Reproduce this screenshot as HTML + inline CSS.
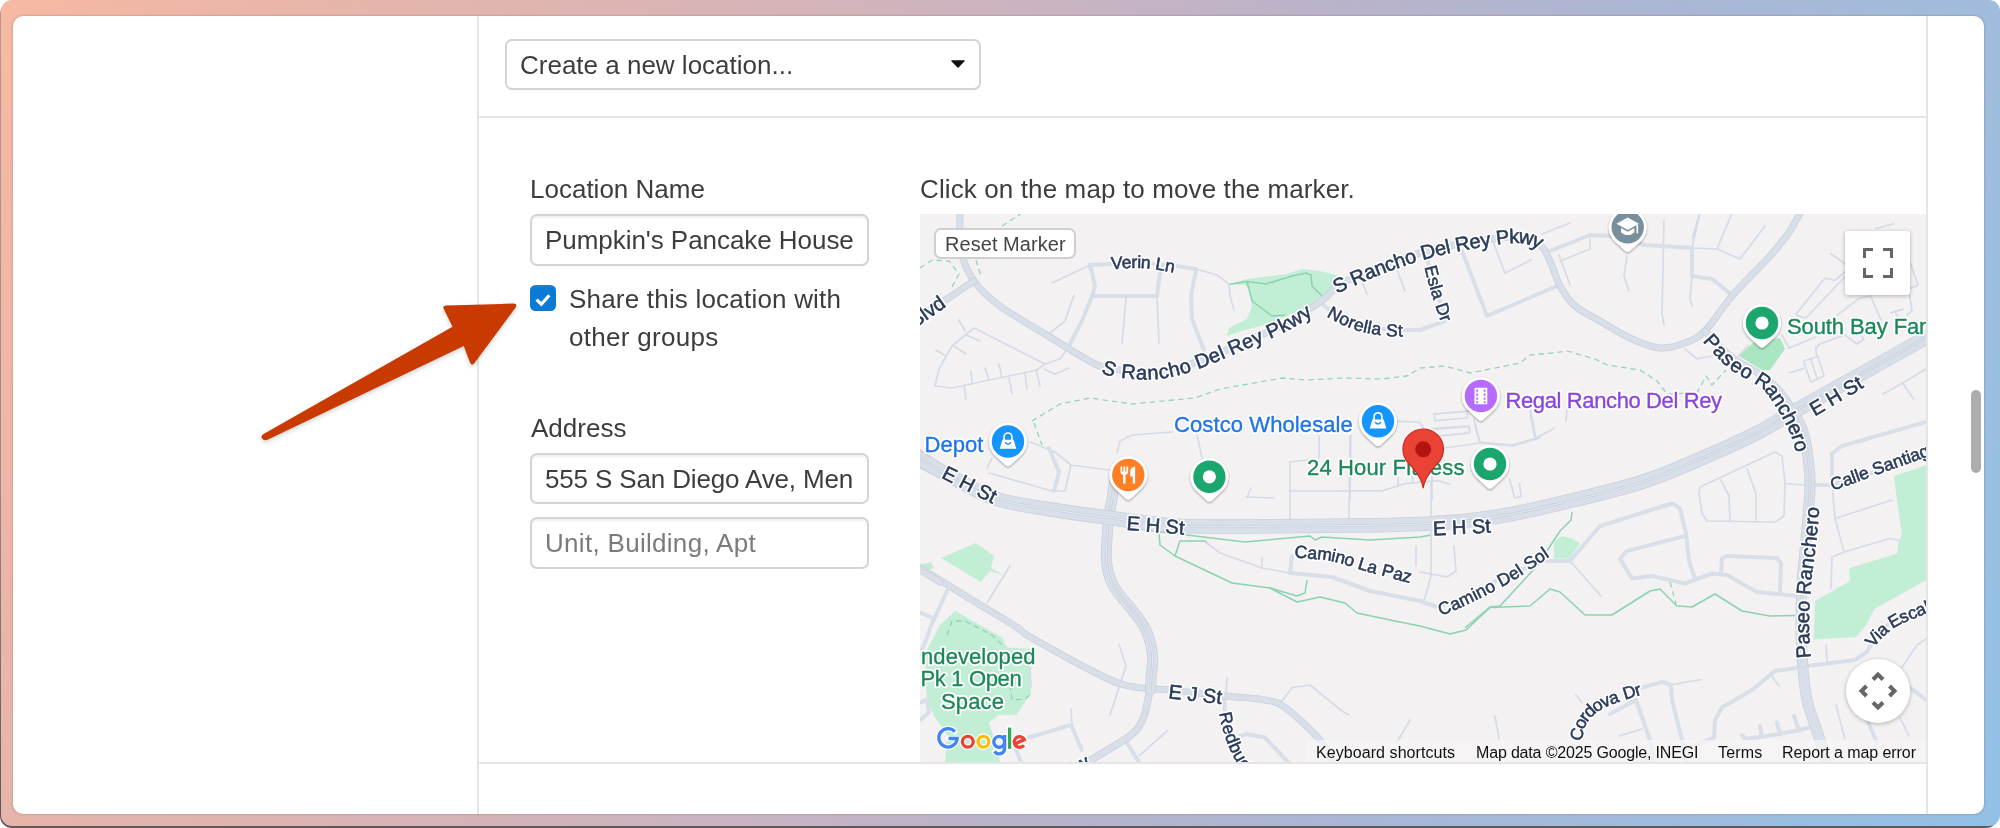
<!DOCTYPE html>
<html>
<head>
<meta charset="utf-8">
<title>Location</title>
<style>
html,body{margin:0;padding:0;}
body{width:2000px;height:828px;overflow:hidden;background:#fff;position:relative;font-family:"Liberation Sans",sans-serif;color:#404040;}
.abs{position:absolute;}
#shadow{left:0;top:2px;width:1998px;height:826px;border-radius:12px;background:linear-gradient(to bottom,#b39a90 0%,#9a8780 60%,#5e5a59 97%);}
#frame{left:1px;top:0;width:1999px;height:826px;border-radius:11px;
  background:linear-gradient(112deg,#f7b9a3 0%,#e7b5aa 14%,#d9b4b5 30%,#ccb4c0 43%,#bab3ca 57%,#aab7d4 72%,#a0bcdc 86%,#92c1e6 100%);}
#panel{left:13px;top:16px;width:1971px;height:798px;border-radius:10px;background:#fff;overflow:hidden;box-shadow:0 0 2.5px rgba(90,40,30,.38);}
.vline{width:2px;background:#e5e5e5;top:0;height:798px;}
.hline{height:2px;background:#e5e5e5;}
.t{will-change:transform;position:absolute;white-space:pre;font-size:26px;line-height:39px;color:#3d3d3d;}
.at{will-change:transform;top:528.5px;font-size:16px;line-height:20px;white-space:pre;color:#111;}
.box{position:absolute;box-sizing:border-box;border:2px solid #d4d4d4;border-radius:7px;background:#fff;box-shadow:inset 0 2px 2px rgba(0,0,0,.06);}
</style>
</head>
<body>
<div id="shadow" class="abs"></div>
<div id="frame" class="abs"></div>
<div id="panel" class="abs">
  <!-- coordinates inside panel are page coords minus (13,16) -->
  <div class="abs vline" style="left:464px;"></div>
  <div class="abs vline" style="left:1913px;"></div>
  <div class="abs hline" style="left:464px;top:100px;width:1451px;"></div>
  <div class="abs hline" style="left:464px;top:746px;width:1451px;"></div>

  <!-- select -->
  <div class="box" style="left:492px;top:23px;width:476px;height:51px;box-shadow:none;"></div>
  <div class="t" style="left:507px;top:30px;">Create a new location...</div>
  <svg class="abs" style="left:938px;top:44px;" width="14" height="8" viewBox="0 0 14 8"><path d="M0.6 0.3 H13.4 Q14 0.6 13.5 1.2 L7.6 7.4 Q7 8 6.4 7.4 L0.5 1.2 Q0 0.6 0.6 0.3Z" fill="#111"/></svg>

  <!-- left column -->
  <div class="t" style="left:517px;top:154px;">Location Name</div>
  <div class="box" style="left:517px;top:198px;width:339px;height:52px;"></div>
  <div class="t" style="left:532px;top:205px;letter-spacing:-0.05px;">Pumpkin's Pancake House</div>

  <div class="abs" style="left:517px;top:269px;width:26px;height:26px;border-radius:5.5px;background:linear-gradient(to bottom,#2a7ec8 0,#097bd5 12%,#097bd5 100%);"></div>
  <svg class="abs" style="left:517px;top:269px;" width="26" height="26" viewBox="0 0 26 26"><path d="M6.6 14.6 L11.3 19.2 L19.3 10.3" fill="none" stroke="#fff" stroke-width="3.2" stroke-linejoin="miter"/></svg>
  <div class="t" style="left:556px;top:263.5px;letter-spacing:0.2px;">Share this location with</div>
  <div class="t" style="left:556px;top:302px;letter-spacing:0.3px;">other groups</div>

  <div class="t" style="left:518px;top:393px;">Address</div>
  <div class="box" style="left:517px;top:437px;width:339px;height:51px;"></div>
  <div class="t" style="left:532px;top:444px;letter-spacing:-0.15px;">555 S San Diego Ave, Men</div>
  <div class="box" style="left:517px;top:501px;width:339px;height:52px;"></div>
  <div class="t" style="left:532px;top:508px;letter-spacing:0.3px;color:#7b7b7b;">Unit, Building, Apt</div>

  <!-- right column heading -->
  <div class="t" style="left:907px;top:154px;letter-spacing:0.12px;">Click on the map to move the marker.</div>

  <!-- MAP -->
  <div id="map" class="abs" style="left:907px;top:198px;width:1006px;height:548px;background:#f3f1f1;overflow:hidden;">
  <!--MAPSVG--><svg class="abs" style="left:0;top:0;will-change:transform;" width="1006" height="548" viewBox="0 0 1006 548" font-family="Liberation Sans, sans-serif">
<defs><filter id="pinsh" x="-30%" y="-30%" width="160%" height="170%"><feDropShadow dx="0" dy="1.2" stdDeviation="1.1" flood-color="#000" flood-opacity="0.38"/></filter></defs>
<rect width="1006" height="548" fill="#f3f1f1"/>
<path d="M309.0 70.0 L327.0 65.0 L367.0 60.0 L382.0 55.0 L400.0 57.0 L420.0 62.0 L412.0 75.0 L397.0 89.0 L367.0 102.0 L345.0 111.0 L325.0 116.0 L307.0 122.0 L309.0 114.0 L327.0 105.0 L332.0 92.0 L329.0 75.0 L325.0 71.0Z" fill="#c3eed6"/>
<path d="M634.0 328.0 L642.0 322.0 L651.0 324.0 L660.0 329.5 L650.0 344.5 L634.0 344.5Z" fill="#c3eed6"/>
<path d="M974.0 262.0 L1010.0 250.0 L1010.0 364.0 L954.3 395.1 L946.3 411.0 L935.8 423.0 L893.4 425.6 L894.0 414.0 L895.0 387.0 L930.0 367.0 L929.0 354.5 L977.0 339.5 L979.0 327.0 L982.0 319.5 L977.0 287.0Z" fill="#c3eed6"/>
<path d="M21.0 344.0 L56.0 329.0 L74.0 342.0 L71.0 354.0 L84.0 361.0 L70.0 357.0 L61.0 368.0Z" fill="#c3eed6"/>
<path d="M-2.0 351.0 L11.0 348.0 L14.0 354.0 L-2.0 358.0Z" fill="#c3eed6"/>
<path d="M35.0 397.0 L82.0 423.5 L87.0 433.5 L115.0 435.0 L110.0 458.5 L111.0 481.0 L106.4 486.0 L96.0 501.2 L79.2 500.8 L68.8 508.4 L72.0 518.0 L80.8 550.0 L25.0 550.0 L27.0 521.0 L15.0 503.5 L7.0 486.0 L5.0 461.0 L7.0 436.0 L20.0 411.0Z" fill="#c3eed6"/>
<path d="M819.0 142.0 L835.0 127.0 L860.0 124.0 L865.0 135.0 L850.0 156.0 L842.0 156.0Z" fill="#a9e6c1"/>
<path d="M309.0 70.5 L327.0 67.5 L346.0 70.0 L372.0 62.0 L386.0 59.0 L391.0 61.0 L392.0 72.0 L402.0 82.0" fill="none" stroke="#8ad3b1" stroke-width="1.5" stroke-linejoin="round"/>
<path d="M327.0 67.5 L332.0 87.0 L352.0 102.0 L365.0 101.0" fill="none" stroke="#8ad3b1" stroke-width="1.5" stroke-linejoin="round"/>
<path d="M195.0 311.0 L240.0 318.0 L275.0 322.0 L325.0 328.0 L390.0 322.0 L395.0 326.0 L402.0 323.0 L450.0 326.0 L500.0 323.0 L511.0 321.0" fill="none" stroke="#8ad3b1" stroke-width="1.5" stroke-linejoin="round"/>
<path d="M239.0 319.0 L240.0 331.0 L255.0 342.0 L312.0 369.0 L350.0 374.0 L377.0 382.0 L385.0 379.0 L387.0 366.0" fill="none" stroke="#8ad3b1" stroke-width="1.5" stroke-linejoin="round"/>
<path d="M255.0 342.0 L260.0 327.0 L285.0 327.0 L289.0 331.0" fill="none" stroke="#8ad3b1" stroke-width="1.5" stroke-linejoin="round"/>
<path d="M350.0 374.0 L377.0 388.0 L400.0 383.0 L425.0 389.0 L437.0 399.0 L475.0 407.0 L500.0 412.0 L530.0 420.0 L546.0 416.0 L570.0 393.5 L610.0 392.0 L630.0 375.0 L640.0 378.0 L665.0 401.0 L692.0 401.0 L730.0 377.0 L740.0 375.0 L757.0 392.0 L772.0 393.0 L795.0 380.0 L822.0 397.0 L850.0 402.0 L875.0 401.5" fill="none" stroke="#8ad3b1" stroke-width="1.5" stroke-linejoin="round"/>
<path d="M652.0 298.0 L651.0 306.0 L640.0 317.0 L617.0 352.0 L580.0 392.0 L570.0 393.0 L545.0 414.0" fill="none" stroke="#8ad3b1" stroke-width="1.5" stroke-linejoin="round"/>
<path d="M82.0 12.0 L102.0 -1.0" fill="none" stroke="#8ad3b1" stroke-width="1.3" stroke-dasharray="5.5 4" stroke-opacity="0.9" stroke-linejoin="round"/>
<path d="M0.0 54.0 L12.0 46.0 L29.0 47.0 L39.0 60.0 L31.0 75.0" fill="none" stroke="#8ad3b1" stroke-width="1.3" stroke-dasharray="5.5 4" stroke-opacity="0.9" stroke-linejoin="round"/>
<path d="M56.0 46.0 L61.0 62.0" fill="none" stroke="#8ad3b1" stroke-width="1.3" stroke-dasharray="5.5 4" stroke-opacity="0.9" stroke-linejoin="round"/>
<path d="M112.0 207.0 L140.0 190.0 L170.0 184.0 L212.0 190.0 L275.0 184.0 L300.0 175.0 L362.0 164.0 L387.0 166.0 L425.0 164.0 L462.0 165.0 L487.0 162.0 L500.0 154.0 L525.0 152.0 L550.0 159.0 L600.0 149.0 L610.0 141.0 L632.0 139.0 L647.0 137.0 L675.0 145.0 L687.0 151.0 L720.0 156.0 L737.0 167.0 L747.0 180.0 L777.0 179.0 L786.0 162.0 L792.0 171.0 L806.0 156.0" fill="none" stroke="#8ad3b1" stroke-width="1.3" stroke-dasharray="5.5 4" stroke-opacity="0.9" stroke-linejoin="round"/>
<path d="M114.0 209.0 L122.0 231.0" fill="none" stroke="#8ad3b1" stroke-width="1.3" stroke-dasharray="5.5 4" stroke-opacity="0.9" stroke-linejoin="round"/>
<path d="M750.0 368.0 L756.0 389.5" fill="none" stroke="#8ad3b1" stroke-width="1.3" stroke-dasharray="5.5 4" stroke-opacity="0.9" stroke-linejoin="round"/>
<path d="M27.0 421.0 L32.0 407.0 L45.0 407.0 L72.0 421.0 L85.0 433.5" fill="none" stroke="#8ad3b1" stroke-width="1.3" stroke-dasharray="5.5 4" stroke-opacity="0.9" stroke-linejoin="round"/>
<path d="M90.0 471.0 L92.0 486.0 L105.0 485.0 L111.0 480.0" fill="none" stroke="#8ad3b1" stroke-width="1.3" stroke-dasharray="5.5 4" stroke-opacity="0.9" stroke-linejoin="round"/>
<path d="M132.0 69.0 L170.0 51.0" fill="none" stroke="#d5dce7" stroke-width="1.7" stroke-linejoin="round" stroke-linecap="round"/>
<path d="M276.0 55.0 L297.0 61.0 L309.0 70.0 L310.0 82.0 L314.0 96.0" fill="none" stroke="#d5dce7" stroke-width="1.7" stroke-linejoin="round" stroke-linecap="round"/>
<path d="M237.0 82.0 L239.0 129.0" fill="none" stroke="#d5dce7" stroke-width="1.7" stroke-linejoin="round" stroke-linecap="round"/>
<path d="M206.0 84.0 L202.0 129.0" fill="none" stroke="#d5dce7" stroke-width="1.7" stroke-linejoin="round" stroke-linecap="round"/>
<path d="M154.0 81.0 L145.0 107.0 L130.0 119.0" fill="none" stroke="#d5dce7" stroke-width="1.7" stroke-linejoin="round" stroke-linecap="round"/>
<path d="M15.0 172.0 L19.0 155.0 L32.0 132.0 L54.0 114.0 L125.0 150.0 L140.0 145.0 L150.0 131.0" fill="none" stroke="#d5dce7" stroke-width="1.7" stroke-linejoin="round" stroke-linecap="round"/>
<path d="M125.0 150.0 L117.0 156.0 L32.0 174.0 L15.0 172.0" fill="none" stroke="#d5dce7" stroke-width="1.7" stroke-linejoin="round" stroke-linecap="round"/>
<path d="M124.0 155.0 L135.0 160.0 L149.0 154.0" fill="none" stroke="#d5dce7" stroke-width="1.7" stroke-linejoin="round" stroke-linecap="round"/>
<path d="M39.0 106.0 L45.0 117.0" fill="none" stroke="#d5dce7" stroke-width="1.7" stroke-linejoin="round" stroke-linecap="round"/>
<path d="M46.0 121.0 L60.0 127.0" fill="none" stroke="#d5dce7" stroke-width="1.7" stroke-linejoin="round" stroke-linecap="round"/>
<path d="M34.0 132.0 L46.0 140.0" fill="none" stroke="#d5dce7" stroke-width="1.7" stroke-linejoin="round" stroke-linecap="round"/>
<path d="M16.0 136.0 L26.0 142.0" fill="none" stroke="#d5dce7" stroke-width="1.7" stroke-linejoin="round" stroke-linecap="round"/>
<path d="M51.0 157.0 L52.0 170.0" fill="none" stroke="#d5dce7" stroke-width="1.7" stroke-linejoin="round" stroke-linecap="round"/>
<path d="M65.0 154.0 L69.0 166.0" fill="none" stroke="#d5dce7" stroke-width="1.7" stroke-linejoin="round" stroke-linecap="round"/>
<path d="M79.0 150.0 L82.0 164.0" fill="none" stroke="#d5dce7" stroke-width="1.7" stroke-linejoin="round" stroke-linecap="round"/>
<path d="M89.0 164.0 L92.0 179.0" fill="none" stroke="#d5dce7" stroke-width="1.7" stroke-linejoin="round" stroke-linecap="round"/>
<path d="M105.0 160.0 L107.0 175.0" fill="none" stroke="#d5dce7" stroke-width="1.7" stroke-linejoin="round" stroke-linecap="round"/>
<path d="M116.0 156.0 L120.0 172.0" fill="none" stroke="#d5dce7" stroke-width="1.7" stroke-linejoin="round" stroke-linecap="round"/>
<path d="M44.0 172.0 L46.0 185.0" fill="none" stroke="#d5dce7" stroke-width="1.7" stroke-linejoin="round" stroke-linecap="round"/>
<path d="M442.0 67.0 L447.0 80.0" fill="none" stroke="#d5dce7" stroke-width="1.7" stroke-linejoin="round" stroke-linecap="round"/>
<path d="M477.0 56.0 L485.0 77.0" fill="none" stroke="#d5dce7" stroke-width="1.7" stroke-linejoin="round" stroke-linecap="round"/>
<path d="M572.0 25.0 L585.0 59.0 L611.0 46.0" fill="none" stroke="#d5dce7" stroke-width="1.7" stroke-linejoin="round" stroke-linecap="round"/>
<path d="M725.0 31.0 L772.0 34.0 L797.0 35.0 L820.0 45.0 L845.0 12.0" fill="none" stroke="#d5dce7" stroke-width="1.7" stroke-linejoin="round" stroke-linecap="round"/>
<path d="M622.0 20.0 L650.0 9.0" fill="none" stroke="#d5dce7" stroke-width="1.7" stroke-linejoin="round" stroke-linecap="round"/>
<path d="M639.0 41.0 L650.0 71.0" fill="none" stroke="#d5dce7" stroke-width="1.7" stroke-linejoin="round" stroke-linecap="round"/>
<path d="M640.0 47.0 L670.0 35.0 L670.0 24.0" fill="none" stroke="#d5dce7" stroke-width="1.7" stroke-linejoin="round" stroke-linecap="round"/>
<path d="M707.0 42.0 L704.0 62.0 L709.0 77.0" fill="none" stroke="#d5dce7" stroke-width="1.7" stroke-linejoin="round" stroke-linecap="round"/>
<path d="M744.0 7.0 L742.0 100.0 L744.0 111.0" fill="none" stroke="#d5dce7" stroke-width="1.7" stroke-linejoin="round" stroke-linecap="round"/>
<path d="M772.0 62.0 L770.0 85.0 L772.0 92.0" fill="none" stroke="#d5dce7" stroke-width="1.7" stroke-linejoin="round" stroke-linecap="round"/>
<path d="M780.0 -1.0 L772.0 34.0" fill="none" stroke="#d5dce7" stroke-width="1.7" stroke-linejoin="round" stroke-linecap="round"/>
<path d="M812.0 -1.0 L797.0 35.0" fill="none" stroke="#d5dce7" stroke-width="1.7" stroke-linejoin="round" stroke-linecap="round"/>
<path d="M765.0 135.0 L777.0 145.0 L792.0 142.0" fill="none" stroke="#d5dce7" stroke-width="1.7" stroke-linejoin="round" stroke-linecap="round"/>
<path d="M876.0 100.0 L881.0 94.0 L905.0 64.0 L915.0 66.5 L924.6 58.0" fill="none" stroke="#d5dce7" stroke-width="1.7" stroke-linejoin="round" stroke-linecap="round"/>
<path d="M876.0 100.0 L880.0 102.7 L886.0 104.0 L924.6 63.0" fill="none" stroke="#d5dce7" stroke-width="1.7" stroke-linejoin="round" stroke-linecap="round"/>
<path d="M911.0 40.0 L924.6 49.5" fill="none" stroke="#d5dce7" stroke-width="1.7" stroke-linejoin="round" stroke-linecap="round"/>
<path d="M956.0 14.5 L974.0 9.7" fill="none" stroke="#d5dce7" stroke-width="1.7" stroke-linejoin="round" stroke-linecap="round"/>
<path d="M990.0 48.0 L998.0 71.0 L988.6 75.0 L992.0 96.6 L987.0 101.0" fill="none" stroke="#d5dce7" stroke-width="1.7" stroke-linejoin="round" stroke-linecap="round"/>
<path d="M950.0 81.0 L961.0 106.0" fill="none" stroke="#d5dce7" stroke-width="1.7" stroke-linejoin="round" stroke-linecap="round"/>
<path d="M917.0 101.4 L939.0 84.5 L950.0 82.0" fill="none" stroke="#d5dce7" stroke-width="1.7" stroke-linejoin="round" stroke-linecap="round"/>
<path d="M970.5 99.0 L982.6 95.4" fill="none" stroke="#d5dce7" stroke-width="1.7" stroke-linejoin="round" stroke-linecap="round"/>
<path d="M975.0 97.5 L978.0 104.0" fill="none" stroke="#d5dce7" stroke-width="1.7" stroke-linejoin="round" stroke-linecap="round"/>
<path d="M895.6 134.0 L900.0 130.0 L924.6 120.8 L936.7 130.0 L944.0 125.6 L939.0 118.0" fill="none" stroke="#d5dce7" stroke-width="1.7" stroke-linejoin="round" stroke-linecap="round"/>
<path d="M869.0 159.0 L883.5 154.6" fill="none" stroke="#d5dce7" stroke-width="1.7" stroke-linejoin="round" stroke-linecap="round"/>
<path d="M883.5 147.0 L898.0 142.5 L904.0 162.0 L890.8 168.0 L883.5 147.0" fill="none" stroke="#d5dce7" stroke-width="1.7" stroke-linejoin="round" stroke-linecap="round"/>
<path d="M891.0 145.0 L897.0 165.0" fill="none" stroke="#d5dce7" stroke-width="1.7" stroke-linejoin="round" stroke-linecap="round"/>
<path d="M895.6 134.0 L896.8 142.5" fill="none" stroke="#d5dce7" stroke-width="1.7" stroke-linejoin="round" stroke-linecap="round"/>
<path d="M963.0 180.0 L982.6 169.0 L1006.7 154.6" fill="none" stroke="#d5dce7" stroke-width="1.7" stroke-linejoin="round" stroke-linecap="round"/>
<path d="M982.6 169.0 L993.4 184.8" fill="none" stroke="#d5dce7" stroke-width="1.7" stroke-linejoin="round" stroke-linecap="round"/>
<path d="M861.8 120.8 L869.0 134.0 L895.6 123.0" fill="none" stroke="#d5dce7" stroke-width="1.7" stroke-linejoin="round" stroke-linecap="round"/>
<path d="M818.0 142.5 L828.0 131.6" fill="none" stroke="#d5dce7" stroke-width="1.7" stroke-linejoin="round" stroke-linecap="round"/>
<path d="M779.7 -1.0 L772.4 24.0" fill="none" stroke="#d5dce7" stroke-width="1.7" stroke-linejoin="round" stroke-linecap="round"/>
<path d="M515.0 200.0 L550.0 197.0" fill="none" stroke="#d5dce7" stroke-width="1.7" stroke-linejoin="round" stroke-linecap="round"/>
<path d="M610.0 190.0 L611.0 207.0" fill="none" stroke="#d5dce7" stroke-width="1.7" stroke-linejoin="round" stroke-linecap="round"/>
<path d="M647.0 195.0 L646.0 207.0" fill="none" stroke="#d5dce7" stroke-width="1.7" stroke-linejoin="round" stroke-linecap="round"/>
<path d="M67.0 254.0 L72.0 244.0" fill="none" stroke="#d5dce7" stroke-width="1.7" stroke-linejoin="round" stroke-linecap="round"/>
<path d="M69.0 259.0 L132.0 277.0 L145.0 277.0 L151.0 251.0 L135.0 238.0 L110.0 228.0" fill="none" stroke="#d5dce7" stroke-width="1.7" stroke-linejoin="round" stroke-linecap="round"/>
<path d="M151.0 251.0 L190.0 256.0" fill="none" stroke="#d5dce7" stroke-width="1.7" stroke-linejoin="round" stroke-linecap="round"/>
<path d="M197.0 239.0 L200.0 227.0 L212.0 221.0 L252.0 218.0" fill="none" stroke="#d5dce7" stroke-width="1.7" stroke-linejoin="round" stroke-linecap="round"/>
<path d="M277.0 221.0 L282.0 244.0" fill="none" stroke="#d5dce7" stroke-width="1.7" stroke-linejoin="round" stroke-linecap="round"/>
<path d="M327.0 283.0 L354.0 284.0" fill="none" stroke="#d5dce7" stroke-width="1.7" stroke-linejoin="round" stroke-linecap="round"/>
<path d="M327.0 283.0 L331.0 274.0" fill="none" stroke="#d5dce7" stroke-width="1.7" stroke-linejoin="round" stroke-linecap="round"/>
<path d="M370.0 304.0 L370.0 248.0 L387.0 246.0" fill="none" stroke="#d5dce7" stroke-width="1.7" stroke-linejoin="round" stroke-linecap="round"/>
<path d="M370.0 277.0 L420.0 277.0" fill="none" stroke="#d5dce7" stroke-width="1.7" stroke-linejoin="round" stroke-linecap="round"/>
<path d="M430.0 222.0 L429.0 304.0" fill="none" stroke="#d5dce7" stroke-width="1.7" stroke-linejoin="round" stroke-linecap="round"/>
<path d="M399.0 222.0 L399.0 244.0" fill="none" stroke="#d5dce7" stroke-width="1.7" stroke-linejoin="round" stroke-linecap="round"/>
<path d="M90.0 352.0 L67.0 389.0" fill="none" stroke="#d5dce7" stroke-width="1.7" stroke-linejoin="round" stroke-linecap="round"/>
<path d="M496.0 332.0 L496.0 352.0" fill="none" stroke="#d5dce7" stroke-width="1.7" stroke-linejoin="round" stroke-linecap="round"/>
<path d="M342.0 354.0 L342.0 344.0" fill="none" stroke="#d5dce7" stroke-width="1.7" stroke-linejoin="round" stroke-linecap="round"/>
<path d="M287.0 329.0 L300.0 339.0 L342.0 354.0 L370.0 359.0" fill="none" stroke="#d5dce7" stroke-width="1.7" stroke-linejoin="round" stroke-linecap="round"/>
<path d="M512.0 214.5 L547.0 212.0" fill="none" stroke="#d5dce7" stroke-width="1.7" stroke-linejoin="round" stroke-linecap="round"/>
<path d="M555.0 212.0 L560.0 228.0 L592.0 231.0 L615.0 224.5 L634.0 214.5" fill="none" stroke="#d5dce7" stroke-width="1.7" stroke-linejoin="round" stroke-linecap="round"/>
<path d="M612.0 209.0 L615.0 224.5" fill="none" stroke="#d5dce7" stroke-width="1.7" stroke-linejoin="round" stroke-linecap="round"/>
<path d="M511.0 267.0 L511.0 362.0 L504.0 387.0" fill="none" stroke="#d5dce7" stroke-width="1.7" stroke-linejoin="round" stroke-linecap="round"/>
<path d="M500.0 358.0 L527.0 363.0 L536.0 357.0 L534.0 332.0" fill="none" stroke="#d5dce7" stroke-width="1.7" stroke-linejoin="round" stroke-linecap="round"/>
<path d="M650.0 347.0 L681.0 382.0" fill="none" stroke="#d5dce7" stroke-width="1.7" stroke-linejoin="round" stroke-linecap="round"/>
<path d="M779.0 279.5 L780.0 273.0 L855.0 238.0 L862.0 242.0 L865.0 269.5 L864.0 302.0 L855.0 308.0 L787.0 307.0 L782.0 299.5 L779.0 279.5" fill="none" stroke="#d5dce7" stroke-width="1.7" stroke-linejoin="round" stroke-linecap="round"/>
<path d="M801.0 266.0 L809.0 282.0 L810.0 307.0" fill="none" stroke="#d5dce7" stroke-width="1.7" stroke-linejoin="round" stroke-linecap="round"/>
<path d="M827.0 254.5 L836.0 279.5 L836.0 308.0" fill="none" stroke="#d5dce7" stroke-width="1.7" stroke-linejoin="round" stroke-linecap="round"/>
<path d="M865.0 269.5 L885.0 271.0" fill="none" stroke="#d5dce7" stroke-width="1.7" stroke-linejoin="round" stroke-linecap="round"/>
<path d="M915.0 304.5 L972.0 286.0" fill="none" stroke="#d5dce7" stroke-width="1.7" stroke-linejoin="round" stroke-linecap="round"/>
<path d="M924.0 338.0 L970.0 324.5 L981.0 327.0" fill="none" stroke="#d5dce7" stroke-width="1.7" stroke-linejoin="round" stroke-linecap="round"/>
<path d="M924.0 338.0 L912.0 343.0 L911.0 374.5" fill="none" stroke="#d5dce7" stroke-width="1.7" stroke-linejoin="round" stroke-linecap="round"/>
<path d="M912.0 269.5 L915.0 304.5 L924.0 338.0" fill="none" stroke="#d5dce7" stroke-width="1.7" stroke-linejoin="round" stroke-linecap="round"/>
<path d="M514.2 200.0 L547.5 197.2 L547.5 204.0 L515.0 206.6 L514.2 200.0" fill="none" stroke="#d5dce7" stroke-width="1.7" stroke-linejoin="round" stroke-linecap="round"/>
<path d="M515.0 215.3 L549.0 212.4 L549.7 218.9 L520.0 221.8" fill="none" stroke="#d5dce7" stroke-width="1.7" stroke-linejoin="round" stroke-linecap="round"/>
<path d="M554.0 205.0 L559.9 229.0 L592.5 232.0 L620.0 224.0" fill="none" stroke="#d5dce7" stroke-width="1.7" stroke-linejoin="round" stroke-linecap="round"/>
<path d="M524.3 234.0 L559.9 229.0" fill="none" stroke="#d5dce7" stroke-width="1.7" stroke-linejoin="round" stroke-linecap="round"/>
<path d="M610.6 196.4 L615.7 223.2" fill="none" stroke="#d5dce7" stroke-width="1.7" stroke-linejoin="round" stroke-linecap="round"/>
<path d="M420.0 276.9 L462.0 276.9 L485.2 269.6 L518.6 266.7 L529.4 270.3" fill="none" stroke="#d5dce7" stroke-width="1.7" stroke-linejoin="round" stroke-linecap="round"/>
<path d="M478.0 263.0 L478.0 270.3" fill="none" stroke="#d5dce7" stroke-width="1.7" stroke-linejoin="round" stroke-linecap="round"/>
<path d="M492.5 261.7 L492.5 267.5" fill="none" stroke="#d5dce7" stroke-width="1.7" stroke-linejoin="round" stroke-linecap="round"/>
<path d="M512.0 263.0 L512.0 286.0" fill="none" stroke="#d5dce7" stroke-width="1.7" stroke-linejoin="round" stroke-linecap="round"/>
<path d="M430.9 221.0 L430.0 286.0" fill="none" stroke="#d5dce7" stroke-width="1.7" stroke-linejoin="round" stroke-linecap="round"/>
<path d="M478.0 207.3 L499.0 208.0 L503.3 213.8" fill="none" stroke="#d5dce7" stroke-width="1.7" stroke-linejoin="round" stroke-linecap="round"/>
<path d="M589.6 265.3 L594.6 284.0 L601.0 282.7 L599.7 269.6" fill="none" stroke="#d5dce7" stroke-width="1.7" stroke-linejoin="round" stroke-linecap="round"/>
<path d="M199.0 430.0 L206.0 452.0 L190.0 501.0" fill="none" stroke="#d5dce7" stroke-width="1.7" stroke-linejoin="round" stroke-linecap="round"/>
<path d="M151.0 495.0 L152.0 511.0" fill="none" stroke="#d5dce7" stroke-width="1.7" stroke-linejoin="round" stroke-linecap="round"/>
<path d="M220.0 541.0 L247.0 517.0" fill="none" stroke="#d5dce7" stroke-width="1.7" stroke-linejoin="round" stroke-linecap="round"/>
<path d="M307.0 463.5 L306.0 481.0" fill="none" stroke="#d5dce7" stroke-width="1.7" stroke-linejoin="round" stroke-linecap="round"/>
<path d="M361.0 488.5 L372.0 473.5 L390.0 471.0 L422.0 497.0 L429.0 501.0" fill="none" stroke="#d5dce7" stroke-width="1.7" stroke-linejoin="round" stroke-linecap="round"/>
<path d="M490.0 506.0 L477.0 528.5" fill="none" stroke="#d5dce7" stroke-width="1.7" stroke-linejoin="round" stroke-linecap="round"/>
<path d="M110.0 453.5 L111.0 473.5" fill="none" stroke="#d5dce7" stroke-width="1.7" stroke-linejoin="round" stroke-linecap="round"/>
<path d="M906.0 431.0 L907.0 447.0" fill="none" stroke="#d5dce7" stroke-width="1.7" stroke-linejoin="round" stroke-linecap="round"/>
<path d="M852.0 462.0 L859.0 472.0" fill="none" stroke="#d5dce7" stroke-width="1.7" stroke-linejoin="round" stroke-linecap="round"/>
<path d="M751.0 471.0 L781.0 465.5" fill="none" stroke="#d5dce7" stroke-width="1.7" stroke-linejoin="round" stroke-linecap="round"/>
<path d="M699.0 522.0 L722.0 515.0" fill="none" stroke="#d5dce7" stroke-width="1.7" stroke-linejoin="round" stroke-linecap="round"/>
<path d="M656.0 481.0 L662.0 488.5" fill="none" stroke="#d5dce7" stroke-width="1.7" stroke-linejoin="round" stroke-linecap="round"/>
<path d="M575.0 502.0 L579.0 525.0" fill="none" stroke="#d5dce7" stroke-width="1.7" stroke-linejoin="round" stroke-linecap="round"/>
<path d="M916.0 491.0 L925.0 525.0" fill="none" stroke="#d5dce7" stroke-width="1.7" stroke-linejoin="round" stroke-linecap="round"/>
<path d="M980.0 503.5 L989.0 522.0" fill="none" stroke="#d5dce7" stroke-width="1.7" stroke-linejoin="round" stroke-linecap="round"/>
<path d="M982.0 453.5 L997.0 431.0 L1006.0 425.0" fill="none" stroke="#d5dce7" stroke-width="1.7" stroke-linejoin="round" stroke-linecap="round"/>
<path d="M775.0 531.0 L740.0 545.0 L700.0 550.0" fill="none" stroke="#d5dce7" stroke-width="1.7" stroke-linejoin="round" stroke-linecap="round"/>
<path d="M170.0 51.0 L192.0 50.0 L224.0 49.0 L257.0 52.0 L276.0 55.0" fill="none" stroke="#d9dfe8" stroke-width="4" stroke-linejoin="round" stroke-linecap="round"/>
<path d="M170.0 51.0 L175.0 72.0 L172.0 82.0 L162.0 107.0 L150.0 130.0" fill="none" stroke="#d9dfe8" stroke-width="4" stroke-linejoin="round" stroke-linecap="round"/>
<path d="M172.0 82.0 L237.0 82.0" fill="none" stroke="#d9dfe8" stroke-width="4" stroke-linejoin="round" stroke-linecap="round"/>
<path d="M240.0 59.0 L237.0 82.0" fill="none" stroke="#d9dfe8" stroke-width="4" stroke-linejoin="round" stroke-linecap="round"/>
<path d="M276.0 56.0 L271.0 82.0 L272.0 105.0 L284.0 136.0" fill="none" stroke="#d9dfe8" stroke-width="4" stroke-linejoin="round" stroke-linecap="round"/>
<path d="M402.0 90.0 L415.0 100.0 L440.0 112.0 L470.0 116.0 L487.0 116.0 L500.0 116.0 L525.0 107.0 L517.0 75.0 L506.0 42.0" fill="none" stroke="#d9dfe8" stroke-width="4" stroke-linejoin="round" stroke-linecap="round"/>
<path d="M542.0 37.0 L567.0 102.0 L637.0 72.0" fill="none" stroke="#d9dfe8" stroke-width="4" stroke-linejoin="round" stroke-linecap="round"/>
<path d="M630.0 37.0 L670.0 21.0 L690.0 22.0 L725.0 31.0 L772.0 34.0" fill="none" stroke="#d9dfe8" stroke-width="4" stroke-linejoin="round" stroke-linecap="round"/>
<path d="M772.0 34.0 L772.0 62.0 L792.0 65.0 L811.0 80.0" fill="none" stroke="#d9dfe8" stroke-width="4" stroke-linejoin="round" stroke-linecap="round"/>
<path d="M892.0 271.0 L910.0 271.0 L950.0 260.0 L1006.0 240.0" fill="none" stroke="#d9dfe8" stroke-width="4" stroke-linejoin="round" stroke-linecap="round"/>
<path d="M912.0 269.5 L912.0 239.5 L922.0 232.0 L1006.0 208.0" fill="none" stroke="#d9dfe8" stroke-width="4" stroke-linejoin="round" stroke-linecap="round"/>
<path d="M370.0 359.0 L412.0 363.0 L450.0 377.0 L500.0 387.0 L517.0 393.0 L540.0 385.0 L580.0 365.0 L622.0 347.0 L650.0 347.0 L680.0 312.0 L752.0 289.5 L760.0 294.5 L766.0 319.5 L769.0 347.0 L775.0 364.5" fill="none" stroke="#d9dfe8" stroke-width="4" stroke-linejoin="round" stroke-linecap="round"/>
<path d="M370.0 359.0 L372.0 342.0" fill="none" stroke="#d9dfe8" stroke-width="4" stroke-linejoin="round" stroke-linecap="round"/>
<path d="M765.0 322.0 L707.0 337.0 L700.0 344.5 L712.0 364.5 L732.0 362.0 L765.0 369.5 L792.0 359.5 L807.0 361.0 L837.0 378.0 L877.0 382.0" fill="none" stroke="#d9dfe8" stroke-width="4" stroke-linejoin="round" stroke-linecap="round"/>
<path d="M801.0 359.5 L802.0 344.5 L807.0 342.0 L857.0 344.0 L861.0 349.5 L860.0 379.5" fill="none" stroke="#d9dfe8" stroke-width="4" stroke-linejoin="round" stroke-linecap="round"/>
<path d="M27.0 377.0 L10.0 414.0 L7.0 423.5 L0.0 441.0" fill="none" stroke="#d9dfe8" stroke-width="4" stroke-linejoin="round" stroke-linecap="round"/>
<path d="M0.0 398.5 L12.0 403.5" fill="none" stroke="#d9dfe8" stroke-width="4" stroke-linejoin="round" stroke-linecap="round"/>
<path d="M129.0 234.0 L139.0 258.0 L134.0 277.0" fill="none" stroke="#d9dfe8" stroke-width="4" stroke-linejoin="round" stroke-linecap="round"/>
<path d="M109.0 523.5 L151.0 511.0 L162.0 536.0" fill="none" stroke="#d9dfe8" stroke-width="4" stroke-linejoin="round" stroke-linecap="round"/>
<path d="M95.0 533.5 L102.0 550.0" fill="none" stroke="#d9dfe8" stroke-width="4" stroke-linejoin="round" stroke-linecap="round"/>
<path d="M206.0 527.0 L220.0 550.0" fill="none" stroke="#d9dfe8" stroke-width="4" stroke-linejoin="round" stroke-linecap="round"/>
<path d="M304.0 483.5 L305.0 496.0 L312.0 520.0 L325.0 550.0" fill="none" stroke="#d9dfe8" stroke-width="4" stroke-linejoin="round" stroke-linecap="round"/>
<path d="M320.0 522.0 L327.0 520.0 L345.0 523.5 L370.0 550.0" fill="none" stroke="#d9dfe8" stroke-width="4" stroke-linejoin="round" stroke-linecap="round"/>
<path d="M0.0 488.5 L7.0 486.0 L9.0 498.5 L0.0 506.0" fill="none" stroke="#d9dfe8" stroke-width="4" stroke-linejoin="round" stroke-linecap="round"/>
<path d="M880.0 453.5 L855.0 457.0 L832.0 476.0 L802.0 493.5 L795.0 506.0 L794.0 523.5 L775.0 531.0" fill="none" stroke="#d9dfe8" stroke-width="4" stroke-linejoin="round" stroke-linecap="round"/>
<path d="M887.0 452.0 L935.0 446.0 L947.0 438.0 L954.0 425.0 L967.0 411.5 L985.0 401.0 L1008.0 392.0" fill="none" stroke="#d9dfe8" stroke-width="4" stroke-linejoin="round" stroke-linecap="round"/>
<path d="M722.0 473.5 L742.0 468.0 L751.0 471.0 L752.0 486.0 L762.0 526.0 L766.0 550.0" fill="none" stroke="#d9dfe8" stroke-width="4" stroke-linejoin="round" stroke-linecap="round"/>
<path d="M716.0 486.0 L730.0 526.0 L734.0 550.0" fill="none" stroke="#d9dfe8" stroke-width="4" stroke-linejoin="round" stroke-linecap="round"/>
<path d="M690.0 500.0 L716.0 486.0" fill="none" stroke="#d9dfe8" stroke-width="4" stroke-linejoin="round" stroke-linecap="round"/>
<path d="M822.0 521.0 L825.0 525.0 L847.0 522.0 L875.0 517.0 L889.0 513.5" fill="none" stroke="#d9dfe8" stroke-width="4" stroke-linejoin="round" stroke-linecap="round"/>
<path d="M840.0 512.0 L842.0 522.0" fill="none" stroke="#d9dfe8" stroke-width="4" stroke-linejoin="round" stroke-linecap="round"/>
<path d="M857.0 508.5 L860.0 520.0" fill="none" stroke="#d9dfe8" stroke-width="4" stroke-linejoin="round" stroke-linecap="round"/>
<path d="M874.0 502.0 L879.0 517.0" fill="none" stroke="#d9dfe8" stroke-width="4" stroke-linejoin="round" stroke-linecap="round"/>
<path d="M947.0 506.0 L957.0 528.5" fill="none" stroke="#d9dfe8" stroke-width="4" stroke-linejoin="round" stroke-linecap="round"/>
<path d="M990.0 473.5 L1006.0 486.0" fill="none" stroke="#d9dfe8" stroke-width="4" stroke-linejoin="round" stroke-linecap="round"/>
<path d="M40.0 -3.0 C40.2 3.7 38.7 25.3 41.0 37.0 C43.3 48.7 47.5 57.8 54.0 67.0 C60.5 76.2 68.2 83.2 80.0 92.0 C91.8 100.8 109.2 110.3 125.0 120.0 C140.8 129.7 162.5 144.0 175.0 150.0 C187.5 156.0 190.5 154.7 200.0 156.0 C209.5 157.3 222.0 158.5 232.0 158.0 C242.0 157.5 251.2 155.2 260.0 153.0 C268.8 150.8 275.0 148.8 285.0 145.0 C295.0 141.2 306.7 135.8 320.0 130.0 C333.3 124.2 351.7 117.0 365.0 110.0 C378.3 103.0 392.2 93.5 400.0 88.0 C407.8 82.5 408.7 80.0 412.0 77.0 C415.3 74.0 411.7 74.2 420.0 70.0 C428.3 65.8 447.5 57.5 462.0 52.0 C476.5 46.5 492.3 41.0 507.0 37.0 C521.7 33.0 535.0 30.3 550.0 28.0 C565.0 25.7 585.3 22.5 597.0 23.0 C608.7 23.5 614.5 27.0 620.0 31.0 C625.5 35.0 626.7 40.2 630.0 47.0 C633.3 53.8 635.8 64.5 640.0 72.0 C644.2 79.5 648.3 86.2 655.0 92.0 C661.7 97.8 670.5 101.5 680.0 107.0 C689.5 112.5 702.0 120.5 712.0 125.0 C722.0 129.5 731.2 133.3 740.0 134.0 C748.8 134.7 757.5 131.8 765.0 129.0 C772.5 126.2 777.2 124.8 785.0 117.0 C792.8 109.2 801.2 94.5 812.0 82.0 C822.8 69.5 840.3 52.8 850.0 42.0 C859.7 31.2 864.8 24.5 870.0 17.0 C875.2 9.5 879.2 0.3 881.0 -3.0" fill="none" stroke="#c9d1dd" stroke-width="7" stroke-linejoin="round" stroke-linecap="round"/>
<path d="M40.0 -3.0 C40.2 3.7 38.7 25.3 41.0 37.0 C43.3 48.7 47.5 57.8 54.0 67.0 C60.5 76.2 68.2 83.2 80.0 92.0 C91.8 100.8 109.2 110.3 125.0 120.0 C140.8 129.7 162.5 144.0 175.0 150.0 C187.5 156.0 190.5 154.7 200.0 156.0 C209.5 157.3 222.0 158.5 232.0 158.0 C242.0 157.5 251.2 155.2 260.0 153.0 C268.8 150.8 275.0 148.8 285.0 145.0 C295.0 141.2 306.7 135.8 320.0 130.0 C333.3 124.2 351.7 117.0 365.0 110.0 C378.3 103.0 392.2 93.5 400.0 88.0 C407.8 82.5 408.7 80.0 412.0 77.0 C415.3 74.0 411.7 74.2 420.0 70.0 C428.3 65.8 447.5 57.5 462.0 52.0 C476.5 46.5 492.3 41.0 507.0 37.0 C521.7 33.0 535.0 30.3 550.0 28.0 C565.0 25.7 585.3 22.5 597.0 23.0 C608.7 23.5 614.5 27.0 620.0 31.0 C625.5 35.0 626.7 40.2 630.0 47.0 C633.3 53.8 635.8 64.5 640.0 72.0 C644.2 79.5 648.3 86.2 655.0 92.0 C661.7 97.8 670.5 101.5 680.0 107.0 C689.5 112.5 702.0 120.5 712.0 125.0 C722.0 129.5 731.2 133.3 740.0 134.0 C748.8 134.7 757.5 131.8 765.0 129.0 C772.5 126.2 777.2 124.8 785.0 117.0 C792.8 109.2 801.2 94.5 812.0 82.0 C822.8 69.5 840.3 52.8 850.0 42.0 C859.7 31.2 864.8 24.5 870.0 17.0 C875.2 9.5 879.2 0.3 881.0 -3.0" fill="none" stroke="#d9dfe8" stroke-width="5.4" stroke-linejoin="round" stroke-linecap="round"/>
<path d="M54.0 67.0 C50.0 69.7 39.5 76.8 30.0 83.0 C20.5 89.2 2.5 100.5 -3.0 104.0" fill="none" stroke="#c9d1dd" stroke-width="7" stroke-linejoin="round" stroke-linecap="round"/>
<path d="M54.0 67.0 C50.0 69.7 39.5 76.8 30.0 83.0 C20.5 89.2 2.5 100.5 -3.0 104.0" fill="none" stroke="#d9dfe8" stroke-width="5.4" stroke-linejoin="round" stroke-linecap="round"/>
<path d="M785.0 117.0 C787.5 119.7 794.7 128.0 800.0 133.0 C805.3 138.0 810.7 142.7 817.0 147.0 C823.3 151.3 831.2 154.3 838.0 159.0 C844.8 163.7 852.3 169.2 858.0 175.0 C863.7 180.8 868.2 187.8 872.0 194.0 C875.8 200.2 878.7 205.7 881.0 212.0 C883.3 218.3 885.2 228.7 886.0 232.0" fill="none" stroke="#c9d1dd" stroke-width="7" stroke-linejoin="round" stroke-linecap="round"/>
<path d="M785.0 117.0 C787.5 119.7 794.7 128.0 800.0 133.0 C805.3 138.0 810.7 142.7 817.0 147.0 C823.3 151.3 831.2 154.3 838.0 159.0 C844.8 163.7 852.3 169.2 858.0 175.0 C863.7 180.8 868.2 187.8 872.0 194.0 C875.8 200.2 878.7 205.7 881.0 212.0 C883.3 218.3 885.2 228.7 886.0 232.0" fill="none" stroke="#d9dfe8" stroke-width="5.4" stroke-linejoin="round" stroke-linecap="round"/>
<path d="M-3.0 352.0 C6.2 357.7 35.7 376.0 52.0 386.0 C68.3 396.0 85.0 405.7 95.0 412.0 C105.0 418.3 97.8 415.8 112.0 424.0 C126.2 432.2 164.5 453.2 180.0 461.0 C195.5 468.8 196.7 468.7 205.0 471.0 C213.3 473.3 222.5 474.2 230.0 475.0 C237.5 475.8 237.5 474.8 250.0 476.0 C262.5 477.2 289.2 480.3 305.0 482.0 C320.8 483.7 335.0 484.1 345.0 486.0 C355.0 487.9 355.8 486.8 365.0 493.5 C374.2 500.2 391.8 516.4 400.0 526.0 C408.2 535.6 411.7 546.8 414.0 551.0" fill="none" stroke="#c9d1dd" stroke-width="7" stroke-linejoin="round" stroke-linecap="round"/>
<path d="M-3.0 352.0 C6.2 357.7 35.7 376.0 52.0 386.0 C68.3 396.0 85.0 405.7 95.0 412.0 C105.0 418.3 97.8 415.8 112.0 424.0 C126.2 432.2 164.5 453.2 180.0 461.0 C195.5 468.8 196.7 468.7 205.0 471.0 C213.3 473.3 222.5 474.2 230.0 475.0 C237.5 475.8 237.5 474.8 250.0 476.0 C262.5 477.2 289.2 480.3 305.0 482.0 C320.8 483.7 335.0 484.1 345.0 486.0 C355.0 487.9 355.8 486.8 365.0 493.5 C374.2 500.2 391.8 516.4 400.0 526.0 C408.2 535.6 411.7 546.8 414.0 551.0" fill="none" stroke="#d9dfe8" stroke-width="5.4" stroke-linejoin="round" stroke-linecap="round"/>
<path d="M-3.0 354.0 L20.0 368.0" fill="none" stroke="#c9d1dd" stroke-width="7" stroke-linejoin="round" stroke-linecap="round"/>
<path d="M-3.0 354.0 L20.0 368.0" fill="none" stroke="#d9dfe8" stroke-width="5.4" stroke-linejoin="round" stroke-linecap="round"/>
<path d="M230.5 470.0 C230.3 471.3 230.1 474.7 229.5 478.0 C228.9 481.3 227.9 486.0 227.0 490.0 C226.1 494.0 225.5 498.0 224.0 502.0 C222.5 506.0 220.8 510.3 218.0 514.0 C215.2 517.7 211.7 520.6 207.0 524.0 C202.3 527.4 196.5 530.5 190.0 534.5 C183.5 538.5 174.3 544.1 168.0 548.0 C161.7 551.9 154.7 556.3 152.0 558.0" fill="none" stroke="#c9d1dd" stroke-width="7.5" stroke-linejoin="round" stroke-linecap="round"/>
<path d="M230.5 470.0 C230.3 471.3 230.1 474.7 229.5 478.0 C228.9 481.3 227.9 486.0 227.0 490.0 C226.1 494.0 225.5 498.0 224.0 502.0 C222.5 506.0 220.8 510.3 218.0 514.0 C215.2 517.7 211.7 520.6 207.0 524.0 C202.3 527.4 196.5 530.5 190.0 534.5 C183.5 538.5 174.3 544.1 168.0 548.0 C161.7 551.9 154.7 556.3 152.0 558.0" fill="none" stroke="#d9dfe8" stroke-width="5.9" stroke-linejoin="round" stroke-linecap="round"/>
<path d="M195.0 262.0 C194.6 265.3 193.6 274.5 192.5 282.0 C191.4 289.5 189.5 296.2 188.5 307.0 C187.5 317.8 185.7 336.2 186.5 347.0 C187.3 357.8 189.1 363.7 193.5 372.0 C197.9 380.3 207.6 389.7 213.0 397.0 C218.4 404.3 222.8 408.7 226.0 416.0 C229.2 423.3 231.7 432.8 232.5 441.0 C233.3 449.2 231.3 459.2 231.0 465.0 C230.7 470.8 230.6 474.2 230.5 476.0" fill="none" stroke="#c9d1dd" stroke-width="11" stroke-linejoin="round" stroke-linecap="round"/>
<path d="M195.0 262.0 C194.6 265.3 193.6 274.5 192.5 282.0 C191.4 289.5 189.5 296.2 188.5 307.0 C187.5 317.8 185.7 336.2 186.5 347.0 C187.3 357.8 189.1 363.7 193.5 372.0 C197.9 380.3 207.6 389.7 213.0 397.0 C218.4 404.3 222.8 408.7 226.0 416.0 C229.2 423.3 231.7 432.8 232.5 441.0 C233.3 449.2 231.3 459.2 231.0 465.0 C230.7 470.8 230.6 474.2 230.5 476.0" fill="none" stroke="#d9dfe8" stroke-width="9.4" stroke-linejoin="round" stroke-linecap="round"/>
<path d="M195.0 262.0 C194.6 265.3 193.6 274.5 192.5 282.0 C191.4 289.5 189.5 296.2 188.5 307.0 C187.5 317.8 185.7 336.2 186.5 347.0 C187.3 357.8 189.1 363.7 193.5 372.0 C197.9 380.3 207.6 389.7 213.0 397.0 C218.4 404.3 222.8 408.7 226.0 416.0 C229.2 423.3 231.7 432.8 232.5 441.0 C233.3 449.2 231.3 459.2 231.0 465.0 C230.7 470.8 230.6 474.2 230.5 476.0" fill="none" stroke="#c9d1dd" stroke-width="2.6" stroke-linejoin="round"/>
<path d="M195.0 262.0 C194.6 265.3 193.6 274.5 192.5 282.0 C191.4 289.5 189.5 296.2 188.5 307.0 C187.5 317.8 185.7 336.2 186.5 347.0 C187.3 357.8 189.1 363.7 193.5 372.0 C197.9 380.3 207.6 389.7 213.0 397.0 C218.4 404.3 222.8 408.7 226.0 416.0 C229.2 423.3 231.7 432.8 232.5 441.0 C233.3 449.2 231.3 459.2 231.0 465.0 C230.7 470.8 230.6 474.2 230.5 476.0" fill="none" stroke="#e8ebf0" stroke-width="0.9" stroke-linejoin="round"/>
<path d="M882.0 440.0 C882.1 441.5 881.7 441.3 882.5 449.0 C883.3 456.7 884.1 473.2 887.0 486.0 C889.9 498.8 896.7 515.0 900.0 526.0 C903.3 537.0 905.8 547.7 907.0 552.0" fill="none" stroke="#c9d1dd" stroke-width="11" stroke-linejoin="round" stroke-linecap="round"/>
<path d="M882.0 440.0 C882.1 441.5 881.7 441.3 882.5 449.0 C883.3 456.7 884.1 473.2 887.0 486.0 C889.9 498.8 896.7 515.0 900.0 526.0 C903.3 537.0 905.8 547.7 907.0 552.0" fill="none" stroke="#d9dfe8" stroke-width="9.4" stroke-linejoin="round" stroke-linecap="round"/>
<path d="M876.0 202.0 C877.2 204.7 881.2 212.3 883.0 218.0 C884.8 223.7 885.8 227.3 887.0 236.0 C888.2 244.7 890.1 256.0 890.0 270.0 C889.9 284.0 887.8 303.3 886.5 320.0 C885.2 336.7 882.9 354.3 882.0 370.0 C881.1 385.7 880.9 400.8 881.0 414.0 C881.1 427.2 882.2 443.2 882.5 449.0" fill="none" stroke="#c9d1dd" stroke-width="11" stroke-linejoin="round" stroke-linecap="round"/>
<path d="M876.0 202.0 C877.2 204.7 881.2 212.3 883.0 218.0 C884.8 223.7 885.8 227.3 887.0 236.0 C888.2 244.7 890.1 256.0 890.0 270.0 C889.9 284.0 887.8 303.3 886.5 320.0 C885.2 336.7 882.9 354.3 882.0 370.0 C881.1 385.7 880.9 400.8 881.0 414.0 C881.1 427.2 882.2 443.2 882.5 449.0" fill="none" stroke="#d9dfe8" stroke-width="9.4" stroke-linejoin="round" stroke-linecap="round"/>
<path d="M876.0 202.0 C877.2 204.7 881.2 212.3 883.0 218.0 C884.8 223.7 885.8 227.3 887.0 236.0 C888.2 244.7 890.1 256.0 890.0 270.0 C889.9 284.0 887.8 303.3 886.5 320.0 C885.2 336.7 882.9 354.3 882.0 370.0 C881.1 385.7 880.9 400.8 881.0 414.0 C881.1 427.2 882.2 443.2 882.5 449.0" fill="none" stroke="#c9d1dd" stroke-width="2.6" stroke-linejoin="round"/>
<path d="M876.0 202.0 C877.2 204.7 881.2 212.3 883.0 218.0 C884.8 223.7 885.8 227.3 887.0 236.0 C888.2 244.7 890.1 256.0 890.0 270.0 C889.9 284.0 887.8 303.3 886.5 320.0 C885.2 336.7 882.9 354.3 882.0 370.0 C881.1 385.7 880.9 400.8 881.0 414.0 C881.1 427.2 882.2 443.2 882.5 449.0" fill="none" stroke="#e8ebf0" stroke-width="0.9" stroke-linejoin="round"/>
<path d="M-4.0 236.5 C1.7 240.2 16.8 250.8 30.0 258.5 C43.2 266.2 61.3 277.3 75.0 283.0 C88.7 288.7 105.8 290.9 112.0 292.5" fill="none" stroke="#c9d1dd" stroke-width="7" stroke-linejoin="round" stroke-linecap="round"/>
<path d="M-4.0 236.5 C1.7 240.2 16.8 250.8 30.0 258.5 C43.2 266.2 61.3 277.3 75.0 283.0 C88.7 288.7 105.8 290.9 112.0 292.5" fill="none" stroke="#d9dfe8" stroke-width="5.4" stroke-linejoin="round" stroke-linecap="round"/>
<path d="M-4.0 248.5 C1.7 251.4 16.8 259.8 30.0 266.0 C43.2 272.2 61.3 281.4 75.0 286.0 C88.7 290.6 105.8 292.2 112.0 293.5" fill="none" stroke="#c9d1dd" stroke-width="7" stroke-linejoin="round" stroke-linecap="round"/>
<path d="M-4.0 248.5 C1.7 251.4 16.8 259.8 30.0 266.0 C43.2 272.2 61.3 281.4 75.0 286.0 C88.7 290.6 105.8 292.2 112.0 293.5" fill="none" stroke="#d9dfe8" stroke-width="5.4" stroke-linejoin="round" stroke-linecap="round"/>
<path d="M-4.0 242.5 C1.7 245.8 16.8 255.0 30.0 262.0 C43.2 269.0 59.2 279.1 75.0 284.5 C90.8 289.9 106.3 291.3 125.0 294.5 C143.7 297.7 164.2 300.6 187.0 303.5 C209.8 306.4 230.7 310.6 262.0 312.0 C293.3 313.4 335.3 312.3 375.0 312.0 C414.7 311.7 466.7 311.5 500.0 310.0 C533.3 308.5 550.0 306.8 575.0 303.0 C600.0 299.2 625.0 293.0 650.0 287.0 C675.0 281.0 702.2 274.5 725.0 267.0 C747.8 259.5 768.3 250.0 787.0 242.0 C805.7 234.0 822.3 226.5 837.0 219.0 C851.7 211.5 856.2 207.7 875.0 197.0 C893.8 186.3 929.2 166.7 950.0 155.0 C970.8 143.3 989.7 132.7 1000.0 127.0 C1010.3 121.3 1010.0 122.0 1012.0 121.0" fill="none" stroke="#c9d1dd" stroke-width="14.5" stroke-linejoin="round" stroke-linecap="round"/>
<path d="M-4.0 242.5 C1.7 245.8 16.8 255.0 30.0 262.0 C43.2 269.0 59.2 279.1 75.0 284.5 C90.8 289.9 106.3 291.3 125.0 294.5 C143.7 297.7 164.2 300.6 187.0 303.5 C209.8 306.4 230.7 310.6 262.0 312.0 C293.3 313.4 335.3 312.3 375.0 312.0 C414.7 311.7 466.7 311.5 500.0 310.0 C533.3 308.5 550.0 306.8 575.0 303.0 C600.0 299.2 625.0 293.0 650.0 287.0 C675.0 281.0 702.2 274.5 725.0 267.0 C747.8 259.5 768.3 250.0 787.0 242.0 C805.7 234.0 822.3 226.5 837.0 219.0 C851.7 211.5 856.2 207.7 875.0 197.0 C893.8 186.3 929.2 166.7 950.0 155.0 C970.8 143.3 989.7 132.7 1000.0 127.0 C1010.3 121.3 1010.0 122.0 1012.0 121.0" fill="none" stroke="#d9dfe8" stroke-width="12.9" stroke-linejoin="round" stroke-linecap="round"/>
<path d="M-4.0 242.5 C1.7 245.8 16.8 255.0 30.0 262.0 C43.2 269.0 59.2 279.1 75.0 284.5 C90.8 289.9 106.3 291.3 125.0 294.5 C143.7 297.7 164.2 300.6 187.0 303.5 C209.8 306.4 230.7 310.6 262.0 312.0 C293.3 313.4 335.3 312.3 375.0 312.0 C414.7 311.7 466.7 311.5 500.0 310.0 C533.3 308.5 550.0 306.8 575.0 303.0 C600.0 299.2 625.0 293.0 650.0 287.0 C675.0 281.0 702.2 274.5 725.0 267.0 C747.8 259.5 768.3 250.0 787.0 242.0 C805.7 234.0 822.3 226.5 837.0 219.0 C851.7 211.5 856.2 207.7 875.0 197.0 C893.8 186.3 929.2 166.7 950.0 155.0 C970.8 143.3 989.7 132.7 1000.0 127.0 C1010.3 121.3 1010.0 122.0 1012.0 121.0" fill="none" stroke="#c9d1dd" stroke-width="2.6" stroke-linejoin="round"/>
<path d="M-4.0 242.5 C1.7 245.8 16.8 255.0 30.0 262.0 C43.2 269.0 59.2 279.1 75.0 284.5 C90.8 289.9 106.3 291.3 125.0 294.5 C143.7 297.7 164.2 300.6 187.0 303.5 C209.8 306.4 230.7 310.6 262.0 312.0 C293.3 313.4 335.3 312.3 375.0 312.0 C414.7 311.7 466.7 311.5 500.0 310.0 C533.3 308.5 550.0 306.8 575.0 303.0 C600.0 299.2 625.0 293.0 650.0 287.0 C675.0 281.0 702.2 274.5 725.0 267.0 C747.8 259.5 768.3 250.0 787.0 242.0 C805.7 234.0 822.3 226.5 837.0 219.0 C851.7 211.5 856.2 207.7 875.0 197.0 C893.8 186.3 929.2 166.7 950.0 155.0 C970.8 143.3 989.7 132.7 1000.0 127.0 C1010.3 121.3 1010.0 122.0 1012.0 121.0" fill="none" stroke="#e8ebf0" stroke-width="0.9" stroke-linejoin="round"/>
<path id="lp1" d="M170.0 147.0 C172.7 148.0 181.0 151.4 186.0 153.0 C191.0 154.6 192.3 155.6 200.0 156.5 C207.7 157.4 222.0 159.0 232.0 158.5 C242.0 158.0 251.2 155.8 260.0 153.5 C268.8 151.2 275.0 148.9 285.0 145.0 C295.0 141.1 306.7 135.8 320.0 130.0 C333.3 124.2 353.0 116.2 365.0 110.0 C377.0 103.8 385.3 97.5 392.0 93.0 C398.7 88.5 402.8 84.7 405.0 83.0" fill="none"/>
<text font-size="20" fill="#fff" stroke="#fff" stroke-width="3.8" stroke-linejoin="round" letter-spacing="0.1" dy="7.1"><textPath href="#lp1" startOffset="14">S Rancho Del Rey Pkwy</textPath></text>
<path id="lp2" d="M408.0 79.0 C410.0 77.6 411.0 74.9 420.0 70.5 C429.0 66.1 447.5 58.0 462.0 52.5 C476.5 47.0 492.3 41.6 507.0 37.5 C521.7 33.4 535.0 30.6 550.0 28.0 C565.0 25.4 585.3 22.0 597.0 22.0 C608.7 22.0 614.2 25.0 620.0 28.0 C625.8 31.0 630.0 38.0 632.0 40.0" fill="none"/>
<text font-size="20" fill="#fff" stroke="#fff" stroke-width="3.8" stroke-linejoin="round" letter-spacing="0" dy="7.1"><textPath href="#lp2" startOffset="8">S Rancho Del Rey Pkwy</textPath></text>
<path id="lp3" d="M-22.0 118.0 L40.0 74.0" fill="none"/>
<text font-size="20" fill="#fff" stroke="#fff" stroke-width="3.8" stroke-linejoin="round" letter-spacing="0" dy="7.1"><textPath href="#lp3" startOffset="16">Blvd</textPath></text>
<path id="lp4" d="M170.0 50.0 C173.7 49.8 183.0 49.3 192.0 49.0 C201.0 48.7 213.2 47.3 224.0 48.0 C234.8 48.7 248.3 51.5 257.0 53.0 C265.7 54.5 272.8 56.3 276.0 57.0" fill="none"/>
<text font-size="17.5" fill="#fff" stroke="#fff" stroke-width="3.8" stroke-linejoin="round" letter-spacing="0" dy="6.2"><textPath href="#lp4" startOffset="21">Verin Ln</textPath></text>
<path id="lp5" d="M402.0 90.0 C404.2 91.7 408.7 96.5 415.0 100.0 C421.3 103.5 430.8 108.3 440.0 111.0 C449.2 113.7 461.3 115.2 470.0 116.0 C478.7 116.8 488.3 116.0 492.0 116.0" fill="none"/>
<text font-size="17.5" fill="#fff" stroke="#fff" stroke-width="3.8" stroke-linejoin="round" letter-spacing="0" dy="6.2"><textPath href="#lp5" startOffset="10">Norella St</textPath></text>
<path id="lp6" d="M508.0 40.0 C508.8 43.7 510.7 53.3 513.0 62.0 C515.3 70.7 519.3 83.7 522.0 92.0 C524.7 100.3 527.8 108.7 529.0 112.0" fill="none"/>
<text font-size="17.5" fill="#fff" stroke="#fff" stroke-width="3.8" stroke-linejoin="round" letter-spacing="0" dy="6.2"><textPath href="#lp6" startOffset="12">Esla Dr</textPath></text>
<path id="lp7" d="M784.0 118.0 C786.7 121.0 794.8 130.7 800.0 136.0 C805.2 141.3 809.7 146.0 815.0 150.0 C820.3 154.0 826.5 156.7 832.0 160.0 C837.5 163.3 843.3 165.7 848.0 170.0 C852.7 174.3 856.3 180.5 860.0 186.0 C863.7 191.5 867.0 197.3 870.0 203.0 C873.0 208.7 875.8 214.2 878.0 220.0 C880.2 225.8 881.8 231.7 883.0 238.0 C884.2 244.3 884.7 254.7 885.0 258.0" fill="none"/>
<text font-size="20" fill="#fff" stroke="#fff" stroke-width="3.8" stroke-linejoin="round" letter-spacing="0.35" dy="7.1"><textPath href="#lp7" startOffset="6">Paseo Ranchero</textPath></text>
<path id="lp8" d="M880.0 203.0 L1000.0 132.0" fill="none"/>
<text font-size="20" fill="#fff" stroke="#fff" stroke-width="3.8" stroke-linejoin="round" letter-spacing="0" dy="7.1"><textPath href="#lp8" startOffset="13">E H St</textPath></text>
<path id="lp9" d="M0.0 245.0 L100.0 296.0" fill="none"/>
<text font-size="20" fill="#fff" stroke="#fff" stroke-width="3.8" stroke-linejoin="round" letter-spacing="0" dy="7.1"><textPath href="#lp9" startOffset="27">E H St</textPath></text>
<path id="lp10" d="M180.0 306.5 L300.0 316.5" fill="none"/>
<text font-size="20" fill="#fff" stroke="#fff" stroke-width="3.8" stroke-linejoin="round" letter-spacing="0" dy="7.1"><textPath href="#lp10" startOffset="27">E H St</textPath></text>
<path id="lp11" d="M500.0 315.0 L620.0 309.0" fill="none"/>
<text font-size="20" fill="#fff" stroke="#fff" stroke-width="3.8" stroke-linejoin="round" letter-spacing="0" dy="7.1"><textPath href="#lp11" startOffset="13">E H St</textPath></text>
<path id="lp12" d="M370.0 337.0 C377.0 337.7 398.7 338.5 412.0 341.0 C425.3 343.5 436.2 348.2 450.0 352.0 C463.8 355.8 487.5 362.0 495.0 364.0" fill="none"/>
<text font-size="17.5" fill="#fff" stroke="#fff" stroke-width="3.8" stroke-linejoin="round" letter-spacing="0" dy="6.2"><textPath href="#lp12" startOffset="5">Camino La Paz</textPath></text>
<path id="lp13" d="M513.0 398.0 C517.5 396.2 528.8 392.2 540.0 387.0 C551.2 381.8 570.0 372.3 580.0 367.0 C590.0 361.7 590.0 361.5 600.0 355.0 C610.0 348.5 633.3 332.5 640.0 328.0" fill="none"/>
<text font-size="17.5" fill="#fff" stroke="#fff" stroke-width="3.8" stroke-linejoin="round" letter-spacing="0.1" dy="6.2"><textPath href="#lp13" startOffset="6">Camino Del Sol</textPath></text>
<path id="lp14" d="M905.0 273.0 L1010.0 235.0" fill="none"/>
<text font-size="17.5" fill="#fff" stroke="#fff" stroke-width="3.8" stroke-linejoin="round" letter-spacing="0" dy="6.2"><textPath href="#lp14" startOffset="6">Calle Santiago</textPath></text>
<path id="lp15" d="M884.0 449.0 C883.7 443.2 882.0 427.2 882.0 414.0 C882.0 400.8 882.7 385.7 884.0 370.0 C885.3 354.3 888.5 335.0 890.0 320.0 C891.5 305.0 892.5 286.7 893.0 280.0" fill="none"/>
<text font-size="20" fill="#fff" stroke="#fff" stroke-width="3.8" stroke-linejoin="round" letter-spacing="0.2" dy="7.1"><textPath href="#lp15" startOffset="5">Paseo Ranchero</textPath></text>
<path id="lp16" d="M944.0 437.0 C945.7 434.7 950.4 427.3 954.3 423.0 C958.2 418.7 963.5 414.1 967.5 411.0 C971.5 407.9 973.5 406.7 978.1 404.4 C982.8 402.1 989.8 399.6 995.4 397.3 C1001.0 395.0 1009.2 391.6 1012.0 390.5" fill="none"/>
<text font-size="17.5" fill="#fff" stroke="#fff" stroke-width="3.8" stroke-linejoin="round" letter-spacing="0" dy="6.2"><textPath href="#lp16" startOffset="8">Via Escalada</textPath></text>
<path id="lp17" d="M655.0 528.0 C656.2 524.2 657.5 511.7 662.0 505.0 C666.5 498.3 672.0 493.2 682.0 488.0 C692.0 482.8 715.3 476.3 722.0 474.0" fill="none"/>
<text font-size="17.5" fill="#fff" stroke="#fff" stroke-width="3.8" stroke-linejoin="round" letter-spacing="0" dy="6.2"><textPath href="#lp17" startOffset="2">Cordova Dr</textPath></text>
<path id="lp18" d="M228.0 475.0 L320.0 485.0" fill="none"/>
<text font-size="20" fill="#fff" stroke="#fff" stroke-width="3.8" stroke-linejoin="round" letter-spacing="0" dy="7.1"><textPath href="#lp18" startOffset="21">E J St</textPath></text>
<path id="lp19" d="M305.0 496.0 C305.7 499.2 306.8 508.0 309.0 515.0 C311.2 522.0 314.2 530.5 318.0 538.0 C321.8 545.5 329.7 556.3 332.0 560.0" fill="none"/>
<text font-size="17.5" fill="#fff" stroke="#fff" stroke-width="3.8" stroke-linejoin="round" letter-spacing="0" dy="6.2"><textPath href="#lp19" startOffset="2">Redbud Ave</textPath></text>
<path id="lp20" d="M134.0 563.0 L170.0 545.0" fill="none"/>
<text font-size="20" fill="#fff" stroke="#fff" stroke-width="3.8" stroke-linejoin="round" letter-spacing="0" dy="7.1"><textPath href="#lp20" startOffset="0">Pkwy</textPath></text>
<text x="867" y="120" font-size="22" fill="#fff" stroke="#fff" stroke-width="4" stroke-linejoin="round" letter-spacing="-0.1">South Bay Farms</text>
<text x="585.5" y="194" font-size="22" fill="#fff" stroke="#fff" stroke-width="4" stroke-linejoin="round" letter-spacing="-0.38">Regal Rancho Del Rey</text>
<text x="254" y="217.5" font-size="22" fill="#fff" stroke="#fff" stroke-width="4" stroke-linejoin="round" letter-spacing="0.1">Costco Wholesale</text>
<text x="4.5" y="238" font-size="22" fill="#fff" stroke="#fff" stroke-width="4" stroke-linejoin="round" letter-spacing="0.05">Depot</text>
<text x="387" y="261" font-size="22" fill="#fff" stroke="#fff" stroke-width="4" stroke-linejoin="round" letter-spacing="0.15">24 Hour Fitness</text>
<text x="1" y="450" font-size="22" fill="#fff" stroke="#fff" stroke-width="4" stroke-linejoin="round" letter-spacing="0.08">ndeveloped</text>
<text x="0.5" y="472" font-size="22" fill="#fff" stroke="#fff" stroke-width="4" stroke-linejoin="round" letter-spacing="-0.35">Pk 1 Open</text>
<text x="21" y="495" font-size="22" fill="#fff" stroke="#fff" stroke-width="4" stroke-linejoin="round" letter-spacing="0.15">Space</text>
<text font-size="20" fill="#2a3a59" stroke="#2a3a59" stroke-width="0.55" letter-spacing="0.1" dy="7.1"><textPath href="#lp1" startOffset="14">S Rancho Del Rey Pkwy</textPath></text>
<text font-size="20" fill="#2a3a59" stroke="#2a3a59" stroke-width="0.55" letter-spacing="0" dy="7.1"><textPath href="#lp2" startOffset="8">S Rancho Del Rey Pkwy</textPath></text>
<text font-size="20" fill="#2a3a59" stroke="#2a3a59" stroke-width="0.55" letter-spacing="0" dy="7.1"><textPath href="#lp3" startOffset="16">Blvd</textPath></text>
<text font-size="17.5" fill="#2a3a59" stroke="#2a3a59" stroke-width="0.55" letter-spacing="0" dy="6.2"><textPath href="#lp4" startOffset="21">Verin Ln</textPath></text>
<text font-size="17.5" fill="#2a3a59" stroke="#2a3a59" stroke-width="0.55" letter-spacing="0" dy="6.2"><textPath href="#lp5" startOffset="10">Norella St</textPath></text>
<text font-size="17.5" fill="#2a3a59" stroke="#2a3a59" stroke-width="0.55" letter-spacing="0" dy="6.2"><textPath href="#lp6" startOffset="12">Esla Dr</textPath></text>
<text font-size="20" fill="#2a3a59" stroke="#2a3a59" stroke-width="0.55" letter-spacing="0.35" dy="7.1"><textPath href="#lp7" startOffset="6">Paseo Ranchero</textPath></text>
<text font-size="20" fill="#2a3a59" stroke="#2a3a59" stroke-width="0.55" letter-spacing="0" dy="7.1"><textPath href="#lp8" startOffset="13">E H St</textPath></text>
<text font-size="20" fill="#2a3a59" stroke="#2a3a59" stroke-width="0.55" letter-spacing="0" dy="7.1"><textPath href="#lp9" startOffset="27">E H St</textPath></text>
<text font-size="20" fill="#2a3a59" stroke="#2a3a59" stroke-width="0.55" letter-spacing="0" dy="7.1"><textPath href="#lp10" startOffset="27">E H St</textPath></text>
<text font-size="20" fill="#2a3a59" stroke="#2a3a59" stroke-width="0.55" letter-spacing="0" dy="7.1"><textPath href="#lp11" startOffset="13">E H St</textPath></text>
<text font-size="17.5" fill="#2a3a59" stroke="#2a3a59" stroke-width="0.55" letter-spacing="0" dy="6.2"><textPath href="#lp12" startOffset="5">Camino La Paz</textPath></text>
<text font-size="17.5" fill="#2a3a59" stroke="#2a3a59" stroke-width="0.55" letter-spacing="0.1" dy="6.2"><textPath href="#lp13" startOffset="6">Camino Del Sol</textPath></text>
<text font-size="17.5" fill="#2a3a59" stroke="#2a3a59" stroke-width="0.55" letter-spacing="0" dy="6.2"><textPath href="#lp14" startOffset="6">Calle Santiago</textPath></text>
<text font-size="20" fill="#2a3a59" stroke="#2a3a59" stroke-width="0.55" letter-spacing="0.2" dy="7.1"><textPath href="#lp15" startOffset="5">Paseo Ranchero</textPath></text>
<text font-size="17.5" fill="#2a3a59" stroke="#2a3a59" stroke-width="0.55" letter-spacing="0" dy="6.2"><textPath href="#lp16" startOffset="8">Via Escalada</textPath></text>
<text font-size="17.5" fill="#2a3a59" stroke="#2a3a59" stroke-width="0.55" letter-spacing="0" dy="6.2"><textPath href="#lp17" startOffset="2">Cordova Dr</textPath></text>
<text font-size="20" fill="#2a3a59" stroke="#2a3a59" stroke-width="0.55" letter-spacing="0" dy="7.1"><textPath href="#lp18" startOffset="21">E J St</textPath></text>
<text font-size="17.5" fill="#2a3a59" stroke="#2a3a59" stroke-width="0.55" letter-spacing="0" dy="6.2"><textPath href="#lp19" startOffset="2">Redbud Ave</textPath></text>
<text font-size="20" fill="#2a3a59" stroke="#2a3a59" stroke-width="0.55" letter-spacing="0" dy="7.1"><textPath href="#lp20" startOffset="0">Pkwy</textPath></text>
<text x="867" y="120" font-size="22" fill="#1b8858" stroke="#1b8858" stroke-width="0.35" letter-spacing="-0.1">South Bay Farms</text>
<text x="585.5" y="194" font-size="22" fill="#8b45dc" stroke="#8b45dc" stroke-width="0.35" letter-spacing="-0.38">Regal Rancho Del Rey</text>
<text x="254" y="217.5" font-size="22" fill="#2075e8" stroke="#2075e8" stroke-width="0.35" letter-spacing="0.1">Costco Wholesale</text>
<text x="4.5" y="238" font-size="22" fill="#2075e8" stroke="#2075e8" stroke-width="0.35" letter-spacing="0.05">Depot</text>
<text x="387" y="261" font-size="22" fill="#1b8858" stroke="#1b8858" stroke-width="0.35" letter-spacing="0.15">24 Hour Fitness</text>
<text x="1" y="450" font-size="22" fill="#1b8858" stroke="#1b8858" stroke-width="0.35" letter-spacing="0.08">ndeveloped</text>
<text x="0.5" y="472" font-size="22" fill="#1b8858" stroke="#1b8858" stroke-width="0.35" letter-spacing="-0.35">Pk 1 Open</text>
<text x="21" y="495" font-size="22" fill="#1b8858" stroke="#1b8858" stroke-width="0.35" letter-spacing="0.15">Space</text>
<g transform="translate(707.7 13.2)"><path d="M-12.7 14.2 A19 19 0 1 1 12.7 14.2 L2.6 23.6 Q0 26 -2.6 23.6Z" fill="#fff" filter="url(#pinsh)"/><circle r="16.2" fill="#78909c"/><path d="M0 -9.6 L11.2 -3.4 L0 2.8 L-11.2 -3.4Z" fill="#fff"/><path d="M-6.6 0.8 L0 4.6 L6.6 0.8 V5.2 Q0 10.6 -6.6 5.2Z" fill="#fff"/><path d="M9.6 -2.6 V6.2" stroke="#fff" stroke-width="1.6" fill="none"/></g>
<g transform="translate(842 109)"><path d="M-12.7 14.2 A19 19 0 1 1 12.7 14.2 L2.6 23.6 Q0 26 -2.6 23.6Z" fill="#fff" filter="url(#pinsh)"/><circle r="16.2" fill="#1aa66d"/><circle r="6.6" fill="#fff"/></g>
<g transform="translate(560.9 182)"><path d="M-12.7 14.2 A19 19 0 1 1 12.7 14.2 L2.6 23.6 Q0 26 -2.6 23.6Z" fill="#fff" filter="url(#pinsh)"/><circle r="16.2" fill="#b56bff"/><path d="M-6.4 -8.2 H6.4 V8.2 H-6.4Z M-4.6 -6.6 V-4.2 H-2.8 V-6.6Z M-4.6 -2.6 V-0.2 H-2.8 V-2.6Z M-4.6 1.4 V3.8 H-2.8 V1.4Z M-4.6 5.2 V7.2 H-2.8 V5.2Z M2.8 -6.6 V-4.2 H4.6 V-6.6Z M2.8 -2.6 V-0.2 H4.6 V-2.6Z M2.8 1.4 V3.8 H4.6 V1.4Z M2.8 5.2 V7.2 H4.6 V5.2Z" fill="#fff" fill-rule="evenodd"/></g>
<g transform="translate(458 207.3)"><path d="M-12.7 14.2 A19 19 0 1 1 12.7 14.2 L2.6 23.6 Q0 26 -2.6 23.6Z" fill="#fff" filter="url(#pinsh)"/><circle r="16.2" fill="#1495ff"/><path d="M-3.9 -1.4 V-4.6 A3.9 3.9 0 0 1 3.9 -4.6 V-1.4" fill="none" stroke="#fff" stroke-width="1.7"/><path d="M-5.7 -1.7 H5.7 L8.3 7.3 H-8.3Z" fill="#fff"/><path d="M-2.6 1.3 Q0 4 2.6 1.3" fill="none" stroke="#1495ff" stroke-width="1.4" stroke-linecap="round"/></g>
<g transform="translate(88 227.5)"><path d="M-12.7 14.2 A19 19 0 1 1 12.7 14.2 L2.6 23.6 Q0 26 -2.6 23.6Z" fill="#fff" filter="url(#pinsh)"/><circle r="16.2" fill="#1495ff"/><path d="M-3.9 -1.4 V-4.6 A3.9 3.9 0 0 1 3.9 -4.6 V-1.4" fill="none" stroke="#fff" stroke-width="1.7"/><path d="M-5.7 -1.7 H5.7 L8.3 7.3 H-8.3Z" fill="#fff"/><path d="M-2.6 1.3 Q0 4 2.6 1.3" fill="none" stroke="#1495ff" stroke-width="1.4" stroke-linecap="round"/></g>
<g transform="translate(208.3 261)"><path d="M-12.7 14.2 A19 19 0 1 1 12.7 14.2 L2.6 23.6 Q0 26 -2.6 23.6Z" fill="#fff" filter="url(#pinsh)"/><circle r="16.2" fill="#ff7f27"/><path d="M-7.8 -8.5 V-3.6 Q-7.8 -0.6 -5.2 -0.4 V8.6 H-2.8 V-0.4 Q-0.2 -0.6 -0.2 -3.6 V-8.5 H-1.9 V-3.6 H-3.1 V-8.5 H-4.9 V-3.6 H-6.1 V-8.5Z" fill="#fff"/><path d="M6.8 -8.6 V8.6 H4.5 V1.6 H1.9 V-3.2 Q1.9 -8 6.8 -8.6Z" fill="#fff"/></g>
<g transform="translate(289.4 262.8)"><path d="M-12.7 14.2 A19 19 0 1 1 12.7 14.2 L2.6 23.6 Q0 26 -2.6 23.6Z" fill="#fff" filter="url(#pinsh)"/><circle r="16.2" fill="#1aa66d"/><circle r="6.6" fill="#fff"/></g>
<g transform="translate(570 250)"><path d="M-12.7 14.2 A19 19 0 1 1 12.7 14.2 L2.6 23.6 Q0 26 -2.6 23.6Z" fill="#fff" filter="url(#pinsh)"/><circle r="16.2" fill="#1aa66d"/><circle r="6.6" fill="#fff"/></g>
<g transform="translate(503.2 235.3)"><path d="M0 38.6 C-1.2 30 -6.5 22.5 -14.3 14.4 A20.3 20.3 0 1 1 14.3 14.4 C6.5 22.5 1.2 30 0 38.6Z" fill="#ea4335" stroke="#c5221f" stroke-width="1.1" stroke-linejoin="round"/><circle r="8" fill="#b31412"/></g>
</svg><!--/MAPSVG-->
    <!-- reset marker button -->
    <div class="abs" style="left:14px;top:14px;width:142px;height:31px;box-sizing:border-box;border:2px solid #cfcfcf;border-radius:7px;background:#fff;"></div>
    <div class="abs" style="left:25px;top:18px;will-change:transform;font-size:20px;line-height:24px;white-space:pre;color:#444;letter-spacing:0.05px;">Reset Marker</div>
    <!-- fullscreen control -->
    <div class="abs" style="left:925px;top:17px;width:65px;height:64px;border-radius:3px;background:#fff;box-shadow:0 1px 4px rgba(0,0,0,.28);"></div>
    <svg class="abs" style="left:943px;top:34px;" width="30" height="30" viewBox="0 0 30 30"><path d="M1.5 10 V1.5 H10 M20 1.5 H28.5 V10 M28.5 20 V28.5 H20 M10 28.5 H1.5 V20" fill="none" stroke="#666" stroke-width="3"/></svg>
    <!-- pan control -->
    <div class="abs" style="left:925.5px;top:445px;width:64px;height:64px;border-radius:50%;background:#fff;box-shadow:0 1px 4px rgba(0,0,0,.28);"></div>
    <svg class="abs" style="left:925.5px;top:445px;" width="64" height="64" viewBox="0 0 64 64"><path d="M27 20.5 L32 15.5 L37 20.5 M27 43.5 L32 48.5 L37 43.5 M20.5 27 L15.5 32 L20.5 37 M43.5 27 L48.5 32 L43.5 37" fill="none" stroke="#666" stroke-width="4"/></svg>
    <!-- google logo -->
    <svg class="abs" style="left:0;top:500px;" width="130" height="48" viewBox="0 500 130 48">
      <defs><g id="glogo" fill="none">
        <path id="gG" d="M34.84 517.64 A9.2 9.2 0 1 0 37.2 524.5 L28.6 524.5"/>
        <circle id="go1" cx="47.8" cy="527.8" r="5.4"/>
        <circle id="go2" cx="63.4" cy="527.8" r="5.4"/>
        <path id="gg" d="M84.6 521 V534.5 A5.4 5.4 0 0 1 74.6 537.3 M84.6 527.8 A5.4 5.4 0 1 0 84.6 527.81"/>
        <path id="gl" d="M89.6 513.6 V534.8"/>
        <path id="ge" d="M94.7 529.9 L104.4 525.6 A5.4 5.4 0 1 0 103.9 531.2"/>
      </g></defs>
      <g fill="none" stroke="#fff" stroke-opacity=".9" stroke-width="5.6" stroke-linejoin="round" stroke-linecap="round">
        <use href="#gG"/><use href="#go1"/><use href="#go2"/><use href="#gg"/><use href="#gl"/><use href="#ge"/>
      </g>
      <g fill="none" stroke-width="3.3">
        <use href="#gG" stroke="#4285f4"/><use href="#go1" stroke="#ea4335"/><use href="#go2" stroke="#fbbc05"/>
        <use href="#gg" stroke="#4285f4"/><use href="#gl" stroke="#34a853"/><use href="#ge" stroke="#ea4335"/>
      </g>
    </svg>
    <!-- attribution -->
    <div class="abs" style="left:386px;top:526px;width:620px;height:22px;background:rgba(246,245,245,.72);"></div>
    <div class="abs at" style="left:396px;letter-spacing:0.07px;">Keyboard shortcuts</div>
    <div class="abs at" style="left:555.5px;letter-spacing:-0.17px;">Map data ©2025 Google, INEGI</div>
    <div class="abs at" style="left:798px;letter-spacing:0.2px;">Terms</div>
    <div class="abs at" style="left:862px;letter-spacing:-0.07px;">Report a map error</div>
  </div>

  <!-- scrollbar thumb -->
  <div class="abs" style="left:1958px;top:374px;width:10px;height:83px;border-radius:5px;background:#adadad;"></div>
</div>

<!-- annotation arrow (page coords) -->
<svg class="abs" style="left:0;top:0;filter:drop-shadow(0 2px 2px rgba(0,0,0,.18));" width="2000" height="828" viewBox="0 0 2000 828">
  <path d="M264 433.8 L452.5 326.8 L443.8 309 Q442.3 305.5 446.3 305.4 L513.6 303.6 Q518 303.6 515.6 307.5 L474.5 363 Q471.5 366.5 470 362.5 L463.8 346 L268 439.6 Q263.5 441.3 261.8 438 Q260.5 435.3 264 433.8Z" fill="#c93a00"/>
</svg>
</body>
</html>
